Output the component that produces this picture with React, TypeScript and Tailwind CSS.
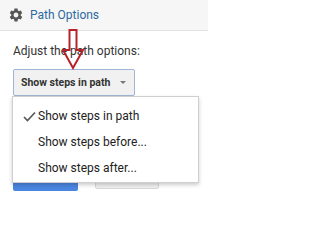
const items = ["Show steps in path", "Show steps before...", "Show steps after..."]

export default function App() {
  return (
    <div className="relative h-[200px] w-[208px] overflow-hidden bg-white font-['Roboto',sans-serif]">
      {/* Header */}
      <div className="flex h-[31px] items-center gap-[6px] border-b border-[#e2e2e2] bg-[#f6f6f6] pl-[8px]">
        <svg width="16" height="16" viewBox="0 0 24 24" className="text-[#555]">
          <path
            fill="currentColor"
            d="M19.14 12.94c.04-.3.06-.61.06-.94 0-.32-.02-.64-.07-.94l2.03-1.58a.49.49 0 0 0 .12-.61l-1.92-3.32a.488.488 0 0 0-.59-.22l-2.39.96c-.5-.38-1.03-.7-1.62-.94l-.36-2.54a.484.484 0 0 0-.48-.41h-3.84c-.24 0-.43.17-.47.41l-.36 2.54c-.59.24-1.13.57-1.62.94l-2.39-.96c-.22-.08-.47 0-.59.22L2.74 8.87c-.12.21-.08.47.12.61l2.03 1.58c-.05.3-.09.63-.09.94s.02.64.07.94l-2.03 1.58a.49.49 0 0 0-.12.61l1.92 3.32c.12.22.37.29.59.22l2.39-.96c.5.38 1.03.7 1.62.94l.36 2.54c.05.24.24.41.48.41h3.84c.24 0 .44-.17.47-.41l.36-2.54c.59-.24 1.13-.56 1.62-.94l2.39.96c.22.08.47 0 .59-.22l1.92-3.32c.12-.22.07-.47-.12-.61l-2.01-1.58zM12 15.6c-1.98 0-3.6-1.62-3.6-3.6s1.62-3.6 3.6-3.6 3.6 1.62 3.6 3.6-1.62 3.6-3.6 3.6z"
          />
        </svg>
        <span className="text-[12px] text-[#2c6aa0]">Path Options</span>
      </div>

      {/* Body */}
      <div className="pl-[13px] pt-[12px]">
        <p className="text-[12px] leading-[16px] text-[#333]">Adjust the path options:</p>

        <div className="relative mt-[10px] w-[122px]">
          <button className="flex h-[27px] w-full items-center justify-between rounded-[2px] border border-[#9fb6d6] bg-[#f1f1f1] pl-[7px] pr-[8px] text-[10.5px] font-bold text-[#333]">
            <span>Show steps in path</span>
            <span className="h-0 w-0 border-x-[3px] border-t-[3px] border-x-transparent border-t-[#777]" />
          </button>

          {/* Menu */}
          <div className="absolute left-[-1px] top-[27px] z-10 w-[187px] border border-[#cfcfcf] bg-white pb-[1px] pt-[6px] shadow-[0_2px_4px_rgba(0,0,0,0.2)]">
            {items.map((item, i) => (
              <div key={item} className="flex h-[26px] items-center text-[12px] text-[#222]">
                <span className="flex w-[23px] justify-end text-[#555]">
                  {i === 0 && (
                    <svg width="13" height="11" viewBox="0 0 13 11">
                      <path d="M1 6 L4.5 9.5 L12 1.5" fill="none" stroke="currentColor" strokeWidth="1.6" />
                    </svg>
                  )}
                </span>
                <span className="pl-[2px]">{item}</span>
              </div>
            ))}
          </div>
        </div>

        <div className="mt-[65px] flex items-start gap-[17px]">
          <button className="h-[30px] w-[65px] rounded-[2px] bg-[#4a86e0] text-[12px] text-white">Apply</button>
          <button className="h-[28px] w-[64px] rounded-[2px] border border-[#d9d9d9] bg-[#f1f1f1] text-[12px] text-[#333]">Cancel</button>
        </div>
      </div>

      {/* Annotation arrow */}
      <svg className="absolute left-[62px] top-[29px]" width="24" height="41" viewBox="0 0 24 41">
        <path d="M7.5 1 H14.5 V21 H21 L11 39 L1 21 H7.5 Z" fill="none" stroke="#b8222a" strokeWidth="2" />
      </svg>
    </div>
  )
}
